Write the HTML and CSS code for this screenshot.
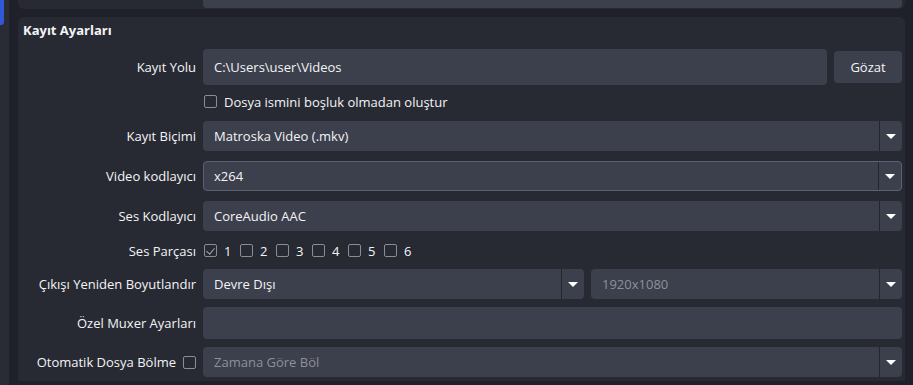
FILE: index.html
```html
<!DOCTYPE html>
<html lang="tr">
<head>
    <meta charset="UTF-8">
    <meta name="viewport" content="width=device-width, initial-scale=1.0">
    <title>Kayıt Ayarları</title>
    <link rel="stylesheet" href="styles.css">
</head>
<body>
    <aside class="sidebar">
        <span class="active"></span>
    </aside>

    <main class="content">
        <section class="group prev">
            <div class="row prev-row">
                <span></span>
                <div class="field prev-field"></div>
            </div>
        </section>

        <section class="group">
            <h2>Kayıt Ayarları</h2>

            <div class="row">
                <label>Kayıt Yolu</label>
                <div class="path">
                    <div class="field text tall">C:\Users\user\Videos</div>
                    <button>Gözat</button>
                </div>
            </div>

            <div class="row compact">
                <span></span>
                <label class="check"><i class="box"></i>Dosya ismini boşluk olmadan oluştur</label>
            </div>

            <div class="row">
                <label>Kayıt Biçimi</label>
                <div class="field combo"><span>Matroska Video (.mkv)</span><b></b></div>
            </div>

            <div class="row">
                <label>Video kodlayıcı</label>
                <div class="field combo focus"><span>x264</span><b></b></div>
            </div>

            <div class="row">
                <label>Ses Kodlayıcı</label>
                <div class="field combo"><span>CoreAudio AAC</span><b></b></div>
            </div>

            <div class="row compact">
                <label>Ses Parçası</label>
                <div class="tracks">
                    <label class="check"><i class="box checked"></i>1</label>
                    <label class="check"><i class="box"></i>2</label>
                    <label class="check"><i class="box"></i>3</label>
                    <label class="check"><i class="box"></i>4</label>
                    <label class="check"><i class="box"></i>5</label>
                    <label class="check"><i class="box"></i>6</label>
                </div>
            </div>

            <div class="row tight">
                <label>Çıkışı Yeniden Boyutlandır</label>
                <div class="pair">
                    <div class="field combo"><span>Devre Dışı</span><b></b></div>
                    <div class="field combo muted"><span>1920x1080</span><b></b></div>
                </div>
            </div>

            <div class="row">
                <label>Özel Muxer Ayarları</label>
                <div class="field text mid"></div>
            </div>

            <div class="row tight">
                <label class="check label-check">Otomatik Dosya Bölme<i class="box"></i></label>
                <div class="field combo muted"><span>Zamana Göre Böl</span><b></b></div>
            </div>
        </section>
    </main>
</body>
</html>
```

FILE: styles.css
```css
body {
    margin: 0;
    height: 100vh;
    overflow: hidden;
    background: #1f2029;
    color: #f4f4f6;
    font-family: 'Open Sans', 'Noto Sans', sans-serif;
    font-size: 13px;
    display: flex;
    gap: 9px;
}

.sidebar {
    width: 9px;
    background: #292b35;

    .active {
        display: block;
        width: 4px;
        height: 25px;
        background: #3158d6;
        border-radius: 0 0 3px 0;
    }
}

.content {
    width: 887px;
    display: flex;
    flex-direction: column;
    gap: 8px;
}

.group {
    background: #272a33;
    border-radius: 6px 6px 0 0;
    padding: 4px 3px 0 5px;

    h2 {
        margin: 0 0 8px;
        font-size: 13px;
        font-weight: 700;
        line-height: 18px;
    }

    &.prev {
        border-radius: 0 0 6px 6px;
        padding: 0 3px 1px 5px;
    }
}

.row {
    display: grid;
    grid-template-columns: 173px 1fr;
    column-gap: 7px;
    align-items: center;
    height: 40px;

    > label {
        text-align: right;
        white-space: nowrap;
    }

    &.compact {
        height: 29px;
    }

    &.tight {
        height: 38px;
    }

    &.prev-row {
        height: 8px;
        align-items: stretch;
    }
}

.field {
    background: #3c3f4c;
    border-radius: 4px;
    box-sizing: border-box;
    height: 30px;
    display: flex;
    align-items: center;
    padding-left: 11px;

    &.prev-field {
        height: 8px;
        border-radius: 0 0 4px 4px;
    }

    &.tall {
        height: 36px;
        flex-grow: 1;
    }

    &.mid {
        height: 32px;
    }

    &.focus {
        border: 1px solid #5d616f;
        padding-left: 10px;
    }

    &.muted span {
        color: #8e9099;
    }
}

.combo {
    span {
        flex-grow: 1;
    }

    b {
        align-self: stretch;
        width: 22px;
        border-left: 1px solid #24262e;
        display: flex;
        align-items: center;
        justify-content: center;

        &::after {
            content: '';
            border-left: 5px solid transparent;
            border-right: 5px solid transparent;
            border-top: 5px solid #fff;
            margin-top: 1px;
        }
    }
}

.path {
    display: flex;
    align-items: center;
    gap: 7px;

    button {
        width: 68px;
        height: 32px;
        border: 0;
        border-radius: 4px;
        background: #3c3f4c;
        color: #f4f4f6;
        font: inherit;
    }
}

.pair {
    display: grid;
    grid-template-columns: 381px 1fr;
    gap: 7px;
}

.check {
    display: flex;
    align-items: center;
    gap: 7px;
    padding-left: 1px;
}

.label-check {
    justify-content: flex-end;
}

.box {
    width: 13px;
    height: 13px;
    flex-shrink: 0;
    box-sizing: border-box;
    border: 1px solid #8b8d95;
    border-radius: 2px;
    position: relative;

    &.checked::after {
        content: '';
        position: absolute;
        left: 3px;
        top: 1px;
        width: 4px;
        height: 7px;
        border: solid #a3a5ac;
        border-width: 0 1.5px 1.5px 0;
        transform: rotate(40deg);
    }
}

.tracks {
    display: flex;

    .check {
        width: 36px;
        box-sizing: border-box;
        flex-shrink: 0;
    }
}
```
